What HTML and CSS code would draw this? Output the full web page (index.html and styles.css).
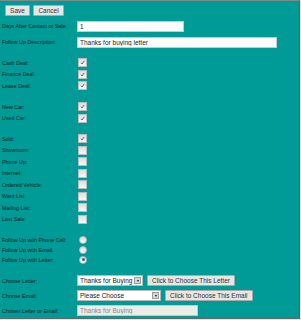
FILE: index.html
```html
<!DOCTYPE html>
<html lang="en">
<head>
    <meta charset="UTF-8">
    <title>Follow Up</title>
    <link rel="stylesheet" href="styles.css">
</head>
<body>
    <div class="panel">
        <div class="toolbar">
            <button class="btn btn-save">Save</button>
            <button class="btn btn-cancel">Cancel</button>
        </div>

        <div class="group group-inputs">
            <div class="row row-input">
                <span class="label">Days After Contact or Sale:</span>
                <input class="txt txt-short" type="text" value="1">
            </div>
            <div class="row row-input">
                <span class="label">Follow Up Description:</span>
                <input class="txt txt-long" type="text" value="Thanks for buying letter">
            </div>
        </div>

        <div class="group group-deal">
            <div class="row"><span class="label">Cash Deal:</span><span class="check on"><svg viewBox="0 0 8 8"><path d="M2.2 4.3 L3.5 5.7 L5.9 2.2"/></svg></span></div>
            <div class="row"><span class="label">Finance Deal:</span><span class="check on"><svg viewBox="0 0 8 8"><path d="M2.2 4.3 L3.5 5.7 L5.9 2.2"/></svg></span></div>
            <div class="row"><span class="label">Lease Deal:</span><span class="check on"><svg viewBox="0 0 8 8"><path d="M2.2 4.3 L3.5 5.7 L5.9 2.2"/></svg></span></div>
        </div>

        <div class="group group-car">
            <div class="row"><span class="label">New Car:</span><span class="check on"><svg viewBox="0 0 8 8"><path d="M2.2 4.3 L3.5 5.7 L5.9 2.2"/></svg></span></div>
            <div class="row"><span class="label">Used Car:</span><span class="check on"><svg viewBox="0 0 8 8"><path d="M2.2 4.3 L3.5 5.7 L5.9 2.2"/></svg></span></div>
        </div>

        <div class="group group-status">
            <div class="row"><span class="label">Sold:</span><span class="check on"><svg viewBox="0 0 8 8"><path d="M2.2 4.3 L3.5 5.7 L5.9 2.2"/></svg></span></div>
            <div class="row"><span class="label">Showroom:</span><span class="check"></span></div>
            <div class="row"><span class="label">Phone Up:</span><span class="check"></span></div>
            <div class="row"><span class="label">Internet:</span><span class="check"></span></div>
            <div class="row"><span class="label">Ordered Vehicle:</span><span class="check"></span></div>
            <div class="row"><span class="label">Want List:</span><span class="check"></span></div>
            <div class="row"><span class="label">Mailing List:</span><span class="check"></span></div>
            <div class="row"><span class="label">Lost Sale:</span><span class="check"></span></div>
        </div>

        <div class="group group-follow">
            <div class="row row-radio"><span class="label">Follow Up with Phone Call:</span><span class="radio"></span></div>
            <div class="row row-radio"><span class="label">Follow Up with Email:</span><span class="radio"></span></div>
            <div class="row row-radio"><span class="label">Follow Up with Letter:</span><span class="radio on"></span></div>
        </div>

        <div class="group group-choose">
            <div class="row row-select">
                <span class="label">Choose Letter:</span>
                <span class="select select-letter">Thanks for Buying<span class="arrow"></span></span>
                <button class="btn btn-choose">Click to Choose This Letter</button>
            </div>
            <div class="row row-select">
                <span class="label">Choose Email:</span>
                <span class="select select-email">Please Choose<span class="arrow"></span></span>
                <button class="btn btn-choose">Click to Choose This Email</button>
            </div>
            <div class="row row-select">
                <span class="label">Chosen Letter or Email:</span>
                <input class="txt txt-chosen" type="text" value="Thanks for Buying" disabled>
            </div>
        </div>
    </div>
</body>
</html>
```

FILE: styles.css
```css
body {
    margin: 0;
    padding: 0;
    background-color: #e4e4e4;
    font-family: "Liberation Sans", Arial, sans-serif;
}
.panel {
    width: 299px;
    height: 317px;
    background-color: #009b97;
    border-top: 1px solid #7d8a8a;
    border-right: 1px solid #56605f;
    border-bottom: 1px solid #5f6b6b;
}
.toolbar {
    display: flex;
    gap: 3px;
    padding: 4px 0 0 5px;
    height: 12px;
}
.btn {
    font-family: "Liberation Sans", Arial, sans-serif;
    font-size: 6.5px;
    color: #333;
    height: 11px;
    line-height: 9px;
    padding: 0 4px;
    margin: 0;
    background-color: #e6e6e4;
    border: 1px solid #a9a9a9;
    border-radius: 1px;
}
.btn-save {
    width: 25px;
}
.btn-cancel {
    width: 31px;
}
.group {
    display: flex;
    flex-direction: column;
}
.group-inputs {
    margin-top: 1px;
}
.group-deal {
    margin-top: 7px;
}
.group-car {
    margin-top: 9.5px;
}
.group-status {
    margin-top: 9px;
}
.group-follow {
    margin-top: 9.5px;
}
.group-choose {
    margin-top: 8.5px;
}
.row {
    display: flex;
    align-items: center;
    height: 11.5px;
}
.row-input {
    height: 16px;
}
.row-radio {
    height: 10px;
}
.row-select {
    height: 15px;
}
.label {
    width: 76px;
    padding-left: 2px;
    box-sizing: border-box;
    flex: none;
    font-size: 5.4px;
    color: #10201f;
    white-space: nowrap;
}
.txt {
    font-family: "Liberation Sans", Arial, sans-serif;
    font-size: 6.5px;
    color: #222;
    height: 11px;
    padding: 0 2px;
    margin: 0 0 0 1px;
    box-sizing: border-box;
    background-color: #fff;
    border: 1px solid #c9c9c9;
    border-radius: 0;
}
.txt-short {
    width: 107px;
}
.txt-long {
    width: 200px;
}
.txt-chosen {
    width: 121px;
    background-color: #edece6;
    color: #8a8a86;
    border-color: #c7c6c0;
}
.check {
    width: 7px;
    height: 7px;
    margin-left: 2px;
    border: 1px solid #b9bcbc;
    background: linear-gradient(#dedede, #f8f8f8);
    display: flex;
}
.check svg {
    width: 7px;
    height: 7px;
}
.check path {
    fill: none;
    stroke: #3c5590;
    stroke-width: 1;
}
.radio {
    width: 6px;
    height: 6px;
    margin-left: 3px;
    border: 1px solid #bcbcbc;
    border-radius: 50%;
    background: linear-gradient(#dcdcdc, #f8f8f8);
    display: flex;
    align-items: center;
    justify-content: center;
}
.radio.on::after {
    content: "";
    width: 3px;
    height: 3px;
    border-radius: 50%;
    background-color: #3a5a9e;
}
.select {
    position: relative;
    display: block;
    height: 11px;
    margin-left: 1px;
    padding: 0 2px;
    box-sizing: border-box;
    font-size: 6.5px;
    line-height: 9px;
    color: #222;
    background-color: #fff;
    border: 1px solid #b8b8b8;
    white-space: nowrap;
    overflow: hidden;
}
.select-letter {
    width: 66px;
}
.select-email {
    width: 84px;
}
.select .arrow {
    position: absolute;
    top: 1px;
    right: 1px;
    width: 7px;
    height: 7px;
    background-color: #d8d8d6;
    border: 1px solid #9c9c9c;
    box-sizing: border-box;
}
.select .arrow::after {
    content: "";
    position: absolute;
    left: 1.5px;
    top: 2px;
    border-left: 1.5px solid transparent;
    border-right: 1.5px solid transparent;
    border-top: 2px solid #111;
}
.btn-choose {
    margin-left: 4px;
    padding: 0 4px;
}
```
